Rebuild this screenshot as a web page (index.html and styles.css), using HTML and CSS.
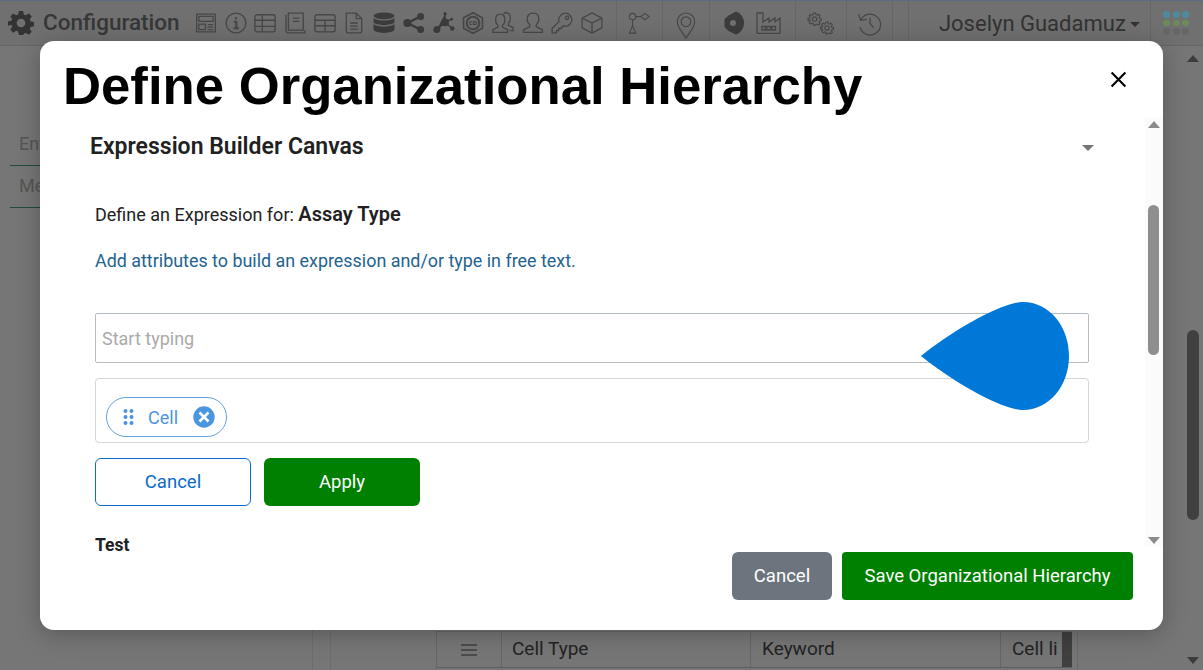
FILE: index.html
```html
<!DOCTYPE html>
<html lang="en">
<head>
<meta charset="utf-8">
<title>Define Organizational Hierarchy</title>
<link rel="stylesheet" href="styles.css">
</head>
<body>
<div class="page">
  <header class="topbar">
    <svg class="gear" viewBox="0 0 24 24"><path fill="#333" fill-rule="evenodd" d="M10 1h4l.6 3.100 1.900.8L19.200 3.200l2.700 2.800-1.800 2.600.8 1.900 3.100.5v4l-3.100.6-.8 1.900 1.800 2.600-2.700 2.800-2.700-1.800-1.900.8L14 23.000h-4l-.6-3.100-1.900-.8-2.700 1.800-2.700-2.800 1.800-2.600-.8-1.900L0 14.500v-4l3.100-.5.8-1.900L2.100 6l2.700-2.800 2.700 1.700 1.900-.8zM12 8a4 4 0 1 0 0 8 4 4 0 0 0 0-8z"/></svg>
    <span class="brand">Configuration</span>
    <div class="icons">
      <svg class="ic" viewBox="0 0 20 20"><path d="M1.500 2h17v16h-17zM3.500 4h13v4.500h-13zM3.500 11h6v5h-6zM11.500 11.500h5M11.500 13.700h5M11.500 16h5"/></svg>
      <svg class="ic" viewBox="0 0 20 20"><circle cx="10" cy="10" r="9"/><path d="M10 4.500v2M8 9h2.300v5.500M7.700 14.800h5" stroke-width="1.900"/></svg>
      <svg class="ic" viewBox="0 0 20 20"><rect x=".8" y="2.500" width="18.400" height="15.500" rx="2"/><path d="M.8 7.500h18.400M.8 13h18.400M7.500 2.500V18"/></svg>
      <svg class="ic" viewBox="0 0 20 20"><path d="M4 1h13.500v15.500H4zM4 1v15.500M1.800 2.500v14.800A1.700 1.700 0 0 0 3.500 19h15.500v-2.500M8 5.500h6M8 8.500h6"/></svg>
      <svg class="ic" viewBox="0 0 20 20"><rect x=".8" y="2.500" width="18.400" height="15.500" rx="2"/><path d="M.8 7.500h18.400M.8 12.500h18.400M10 7.500V18"/></svg>
      <svg class="ic" viewBox="0 0 20 20"><path d="M3 1h9l5 5v11.500a1.500 1.500 0 0 1-1.500 1.500h-11A1.500 1.500 0 0 1 3 17.500zM12 1v5h5M6.500 10h7M6.500 12.800h7M6.500 15.600h7"/></svg>
      <svg class="ic solid" viewBox="0 0 20 20"><ellipse cx="10" cy="3.500" rx="9.500" ry="3"/><path d="M.5 5.500c2 3 17 3 19 0v4c-2 3-17 3-19 0zM.5 11c2 3 17 3 19 0v5c-1 4-18 4-19 0z"/></svg>
      <svg class="ic solid" viewBox="0 0 20 20"><circle cx="4" cy="10" r="3.700"/><circle cx="16" cy="4" r="3.200"/><circle cx="16" cy="16" r="3.200"/><path d="M4 10 16 4M4 10l12 6" stroke="#3c3c3c" stroke-width="2.200"/></svg>
      <svg class="ic solid" viewBox="0 0 20 20"><circle cx="11" cy="9.500" r="3.500"/><circle cx="11" cy="1.500" r="1.500"/><circle cx="3.500" cy="16" r="3.200"/><circle cx="17.500" cy="15" r="2"/><circle cx="17" cy="6.500" r="1.200"/><path d="M11 1.500v8L3.500 16M11 9.500l6.500 5.500M11 9.500l6-3" stroke="#3c3c3c" stroke-width="1.300"/></svg>
      <svg class="ic" viewBox="0 0 20 20"><path d="M10 .6 18.600 5.300v9.400L10 19.400 1.400 14.700V5.300z" stroke-width="1.500"/><circle cx="10" cy="10" r="5.700" stroke-width="2"/><text x="10" y="12" class="cd">CD</text></svg>
      <svg class="ic" viewBox="0 0 20 20"><path d="M.8 18.500v-2.500l4.700-2.300v-1.700c-1.500-1-2.200-3-2.200-5 0-3 1.700-5 4.200-5s4.200 2 4.200 5c0 2-.7 4-2.200 5v1.700l4.700 2.300v2.500zM10.500 1.500c.8-.6 1.500-.8 2.200-.8 2.500 0 4 2 4 5 0 2-.6 3.700-1.800 4.800v1.500l4.300 2.300v2.700h-3"/></svg>
      <svg class="ic" viewBox="0 0 20 20"><path d="M1.500 18.500v-2.500l5.500-2.600v-2c-1.500-1-2.300-3-2.300-5C4.700 3 6.700 1 10 1s5.300 2 5.300 5.400c0 2-.8 4-2.300 5v2l5.500 2.600v2.500z"/></svg>
      <svg class="ic" viewBox="0 0 20 20"><path d="M13 1c3 0 6 3 6 6s-3 6-6 6c-.7 0-1.300-.1-2-.4L9 15H7v2H5v2H1v-4l6.400-6.400C7 7.800 7 7.400 7 7c0-3 3-6 6-6zM14.500 3.800a1.500 1.500 0 1 0 .1 0"/></svg>
      <svg class="ic" viewBox="0 0 20 20"><path d="M10 .8 19 5.500v9L10 19.200 1 14.500v-9zM1 5.500 10 10l9-4.500M10 10v9.200"/></svg>
    </div>
    <div class="sep-group">
      <div class="cell">
        <svg class="ic wide" viewBox="0 0 24 24"><circle cx="5" cy="5" r="3.500"/><path d="M18.500 1.500 23 5l-4.500 3.500L14 5zM8.500 5H14M5 8.500V15M5 15l-3.500 8h7z"/></svg>
      </div>
      <div class="cell">
        <svg class="ic pin" viewBox="0 0 20 28"><path d="M10 1a9 9 0 0 0-9 9C1 15.500 6 21 10 27c4-6 9-11.500 9-17A9 9 0 0 0 10 1z"/><circle cx="10" cy="10" r="5"/></svg>
      </div>
      <div class="cell pair">
        <svg class="ic solid blob" viewBox="0 0 20 24"><path fill-rule="evenodd" d="M12 .5c5 2 8 6 8 11.500s-3 9.500-8 11.500L4.500 20 .5 16V8l4-3.500zM9 9a3 3 0 1 0 0 6 3 3 0 0 0 0-6z"/></svg>
        <svg class="ic factory" viewBox="0 0 25 22"><path d="M1 1h6v9l6-4v4l6-4v4l5-4v14a1.500 1.500 0 0 1-1.500 1.500h-20A1.500 1.500 0 0 1 1 20zM6 14.500h3.500v3.500H6zM11 14.500h3.500v3.500H11zM16 14.500h3.500v3.500H16z" stroke-width="1.300"/></svg>
      </div>
      <div class="cell">
        <svg class="ic gears" viewBox="0 0 27 23">
          <g transform="translate(1 .5) scale(.55)"><path vector-effect="non-scaling-stroke" d="M10 1h4l.6 3.100 1.900.8L19.200 3.200l2.700 2.800-1.800 2.600.8 1.900 3.100.5v4l-3.100.6-.8 1.900 1.800 2.600-2.700 2.800-2.700-1.800-1.900.8L14 23.000h-4l-.6-3.100-1.900-.8-2.700 1.800-2.700-2.800 1.800-2.600-.8-1.900L0 14.500v-4l3.100-.5.8-1.900L2.100 6l2.700-2.800 2.700 1.700 1.900-.8zM12 8a4 4 0 1 0 0 8 4 4 0 0 0 0-8z"/></g>
          <g transform="translate(13.500 9.500) scale(.54)"><path vector-effect="non-scaling-stroke" d="M10 1h4l.6 3.100 1.900.8L19.200 3.200l2.700 2.800-1.800 2.600.8 1.900 3.100.5v4l-3.100.6-.8 1.900 1.800 2.600-2.700 2.800-2.700-1.800-1.900.8L14 23.000h-4l-.6-3.100-1.900-.8-2.700 1.800-2.700-2.800 1.800-2.600-.8-1.900L0 14.500v-4l3.100-.5.8-1.900L2.100 6l2.700-2.800 2.700 1.700 1.900-.8zM12 8a4 4 0 1 0 0 8 4 4 0 0 0 0-8z"/></g>
        </svg>
      </div>
      <div class="cell">
        <svg class="ic hist" viewBox="0 0 24 24"><path d="M3.500 9a10 10 0 1 1-.6 6.500M1.500 3 3.500 9l6-1M12.500 6.500V12l3.500 4"/></svg>
      </div>
      <div class="cell spacer"></div>
    </div>
    <div class="user"><span>Joselyn Guadamuz</span><i class="caret"></i></div>
    <div class="apps">
      <i class="teal"></i><i class="teal"></i><i class="teal"></i>
      <i class="olive"></i><i class="olive"></i><i class="olive"></i>
      <i class="gray"></i><i class="gray"></i><i class="gray"></i>
    </div>
  </header>

  <div class="content">
    <aside class="side">
      <div class="field">Enter</div>
      <div class="field">Meta</div>
    </aside>
    <main class="grid-area">
      <div class="row">
        <div class="c handle"><span></span><span></span><span></span></div>
        <div class="c type">Cell Type</div>
        <div class="c key">Keyword</div>
        <div class="c val">Cell li</div>
      </div>
    </main>
    <div class="page-scroll"><i class="up"></i><b></b><i class="down"></i></div>
  </div>

  <div class="modal">
    <div class="modal-head">
      <h1>Define Organizational Hierarchy</h1>
      <svg class="close" viewBox="0 0 16 16"><path d="M1.500 1.500l13 13M14.500 1.500l-13 13"/></svg>
    </div>
    <div class="modal-scroll">
      <div class="scroll-body">
        <div class="canvas-head"><h2>Expression Builder Canvas</h2><i class="mini-caret"></i></div>
        <p class="define">Define an Expression for: <strong>Assay Type</strong></p>
        <p class="hint">Add attributes to build an expression and/or type in free text.</p>
        <div class="input">Start typing</div>
        <div class="chips">
          <div class="chip">
            <svg class="drag" viewBox="0 0 10 16"><circle cx="2" cy="2" r="2"/><circle cx="8" cy="2" r="2"/><circle cx="2" cy="8" r="2"/><circle cx="8" cy="8" r="2"/><circle cx="2" cy="14" r="2"/><circle cx="8" cy="14" r="2"/></svg>
            <span>Cell</span>
            <svg class="chip-x" viewBox="0 0 24 24"><circle cx="12" cy="12" r="12"/><path d="M7.500 7.500l9 9M16.500 7.500l-9 9"/></svg>
          </div>
        </div>
        <div class="actions">
          <button class="btn outline">Cancel</button>
          <button class="btn green">Apply</button>
        </div>
        <div class="test">Test</div>
      </div>
      <div class="modal-bar"><i class="up"></i><b></b><i class="down"></i></div>
    </div>
    <div class="modal-foot">
      <button class="btn gray-btn">Cancel</button>
      <button class="btn green save">Save Organizational Hierarchy</button>
    </div>
  </div>
  <svg class="drop" viewBox="0 0 148 108"><path d="M0 54C30 30 62 12 84 4 92 1 98 0 102 0c26 0 46 24 46 54s-20 54-46 54c-4 0-10-1-18-4C62 96 30 78 0 54z"/></svg>
</div>
</body>
</html>
```
FILE: styles.css
```css
* { box-sizing: border-box; }
html, body { margin: 0; height: 100%; overflow: hidden; }
body { font-family: Roboto, "Liberation Sans", sans-serif; color: #212121; }
button { font: inherit; }

.page { position: relative; width: 1203px; height: 670px; background: #767676; overflow: hidden; }

.topbar { display: flex; align-items: center; height: 46px; padding-left: 8px; background: #707070; border-top: 1px solid #5b6b85; border-bottom: 1px solid #666; }
.gear { width: 26px; height: 26px; flex: none; }
.brand { margin: -2px 0 0 9px; width: 152px; font-size: 22.500px; font-weight: 500; color: #373737; flex: none; }
.icons { display: flex; align-items: center; gap: 7.700px; flex: none; margin-top: -1px; }
.ic { width: 22px; height: 22px; fill: none; stroke: #474747; stroke-width: 1.200; flex: none; }
.ic.solid { fill: #3c3c3c; stroke: none; }
.cd { font: 700 5.500px Roboto, sans-serif; fill: #3c3c3c; stroke: none; text-anchor: middle; }
.sep-group { display: flex; height: 44px; margin-left: 13px; flex: none; }
.cell { display: flex; align-items: center; justify-content: center; gap: 12px; border-left: 1px solid #666; }
.cell:nth-child(1) { width: 46px; }
.cell:nth-child(2) { width: 47px; }
.cell:nth-child(3) { width: 86px; }
.cell:nth-child(4) { width: 51px; }
.cell:nth-child(5) { width: 46px; }
.cell.spacer { width: 17px; border-right: 1px solid #666; }
.ic.wide { width: 22px; height: 24px; }
.ic.pin { width: 20px; height: 27px; margin-top: 4px; }
.ic.blob { width: 20px; height: 24px; }
.ic.factory { width: 25px; height: 22px; }
.ic.gears { width: 27px; height: 23px; }
.ic.gears path { stroke-width: 1.100; }
.ic.hist { width: 25px; height: 25px; }
.user { display: flex; align-items: center; gap: 4px; margin-left: 30px; width: 211px; flex: none; font-size: 22px; color: #333; white-space: nowrap; }
.caret { width: 0; height: 0; border: 5px solid transparent; border-top: 5px solid #333; border-bottom: 0; margin-top: 3px; }
.apps { display: grid; grid-template-columns: repeat(3, 7px); gap: 2px 2.600px; padding-left: 12px; flex: none; height: 44px; align-content: center; width: 53px; border-left: 1px solid #666; }
.apps i { width: 7px; height: 6.500px; border-radius: 50%; }
.apps .teal { background: #4f8a9c; }
.apps .olive { background: #6e8a5a; }
.apps .gray { background: #666; }

.content { display: flex; height: 624px; }
.side { width: 313px; flex: none; padding: 78px 0 0 10px; border-right: 1px solid #6c6c6c; }
.field { height: 42px; font-size: 18px; line-height: 40px; padding-left: 9px; color: #555; border-bottom: 1px solid #1f4f38; }
.grid-area { flex: 1; display: flex; align-items: flex-end; margin-left: 17px; padding: 0 0 2px 105px; border-left: 1px solid #6c6c6c; border-right: 1px solid #6a6a6a; }
.row { display: flex; height: 37px; border-top: 1px solid #666; border-bottom: 1px solid #5f5f5f; font-size: 19px; color: #232323; line-height: 33px; flex: none; }
.row .c { border-left: 1px solid #666; padding-left: 11px; white-space: nowrap; overflow: hidden; }
.row .handle { width: 65px; display: flex; flex-direction: column; justify-content: center; align-items: center; gap: 3px; padding: 0; }
.handle span { display: block; width: 16px; height: 2px; background: #4c4c4c; }
.row .type { width: 249px; padding-left: 10px; }
.key { width: 250px; }
.val { width: 72px; border-right: 10px solid #404040; }

.page-scroll { position: relative; display: flex; flex-direction: column; justify-content: space-between; align-items: flex-end; width: 125px; padding: 9px 4px 6px 0; flex: none; }
.page-scroll .up { border: 6.500px solid transparent; border-bottom: 7px solid #3c3c3c; border-top: 0; }
.page-scroll .down { border: 6.500px solid transparent; border-top: 7px solid #3c3c3c; border-bottom: 0; }
.page-scroll b { position: absolute; right: 4px; top: 284px; width: 12px; height: 190px; border-radius: 6px; background: #404040; }

.modal { position: absolute; left: 40px; top: 41px; width: 1123px; height: 589px; background: #fff; border-radius: 14px; box-shadow: 0 4px 24px rgba(0,0,0,.25); display: flex; flex-direction: column; overflow: hidden; }
.modal-head { display: flex; align-items: center; justify-content: space-between; height: 76px; padding: 0 36px 0 23px; flex: none; }
.modal-head h1 { margin: 14px 0 0; font: 700 52.700px/1 "Liberation Sans", Arial, sans-serif; color: #000; white-space: nowrap; }
.close { width: 17px; height: 17px; fill: none; stroke: #000; stroke-width: 2; }
.modal-scroll { position: relative; display: flex; height: 430px; flex: none; }
.scroll-body { flex: 1; min-width: 0; padding: 0 56px 0 50px; }
.canvas-head { display: flex; align-items: center; justify-content: space-between; height: 24px; margin-top: 18px; }
.canvas-head h2 { margin: 0; font-size: 23px; font-weight: 600; line-height: 24px; }
.mini-caret { width: 0; height: 0; margin: 1px -5px 0 0; border: 6px solid transparent; border-top: 6px solid #757575; border-bottom: 0; }
.define { margin: 43px 0 0 5px; font-size: 18px; line-height: 24px; }
.define strong { font-size: 20px; font-weight: 600; }
.hint { margin: 22px 0 0 5px; font-size: 17.900px; line-height: 24px; color: #22638f; }
.input { height: 50px; margin: 40px 0 0 5px; padding-left: 6px; border: 1px solid #b5bcc3; border-radius: 2px; font-size: 18px; line-height: 50px; color: #aaa; }
.chips { height: 65px; margin: 15px 0 0 5px; padding: 18px 10px; border: 1px solid #d6d6d6; border-radius: 4px; }
.chip { display: inline-flex; align-items: center; height: 40px; width: 121px; padding: 0 10px 0 16px; border: 1px solid #5da1e2; border-radius: 20px; color: #4d94dd; font-size: 18px; }
.drag { width: 11px; height: 16px; fill: #4d94dd; flex: none; }
.chip span { margin-left: 14px; }
.chip-x { width: 24px; height: 24px; margin-left: auto; fill: #4a96e0; stroke: #fff; stroke-width: 2.600; flex: none; }
.actions { display: flex; gap: 13px; margin: 15px 0 0 5px; }
.btn { height: 48px; width: 156px; border: 1px solid transparent; border-radius: 6px; font-size: 18.500px; padding: 0; cursor: pointer; }
.btn.outline { background: #fff; border-color: #0b6bcb; color: #0b6bcb; }
.btn.green { background: #008000; color: #fff; }
.test { margin: 27px 0 0 5px; font-size: 17.500px; font-weight: 700; line-height: 24px; }
.modal-bar { position: relative; display: flex; flex-direction: column; justify-content: space-between; align-items: center; width: 18px; padding: 4px 0 3px; background: #fbfbfb; flex: none; }
.modal-bar .up { border: 6.500px solid transparent; border-bottom: 7px solid #8b8b8b; border-top: 0; }
.modal-bar .down { border: 6.500px solid transparent; border-top: 7px solid #8b8b8b; border-bottom: 0; }
.modal-bar b { position: absolute; left: 3px; top: 88px; width: 11px; height: 150px; border-radius: 6px; background: #8e8e8e; }
.modal-foot { display: flex; justify-content: flex-end; gap: 10px; padding: 5px 30px 0 0; position: relative; }
.btn.gray-btn { width: 100px; background: #6c757d; color: #fff; }
.btn.save { width: 291px; border-radius: 4px; }

.drop { position: absolute; left: 921px; top: 302px; width: 148px; height: 108px; fill: #0078d7; }
```
